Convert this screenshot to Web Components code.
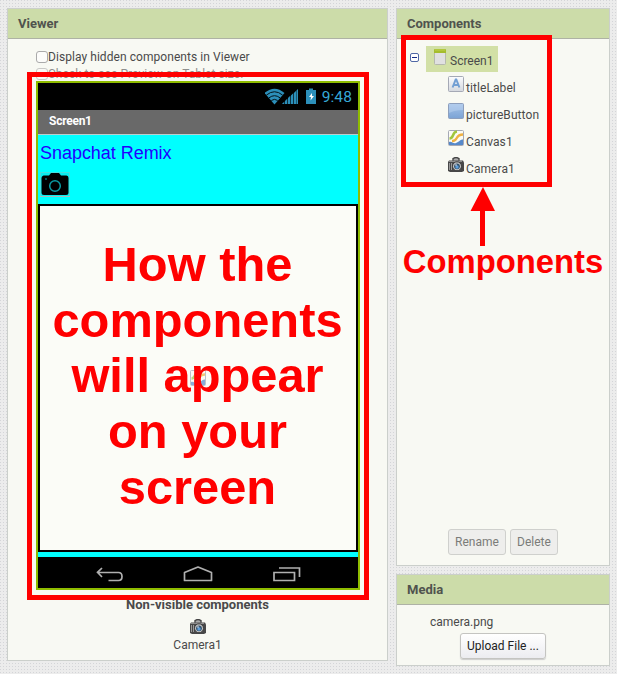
<!DOCTYPE html>
<html lang="en"><head><meta charset="utf-8"><title>Designer</title>
<style>
html,body{margin:0;height:674px;overflow:hidden}
body{font:12px/16px Roboto,sans-serif;color:#4a4a4a}
</style></head><body>
<designer-app></designer-app>
<script>
function define(name, html, setup){
  const t=document.createElement('template'); t.innerHTML=html;
  customElements.define(name, class extends HTMLElement{
    connectedCallback(){
      if(this.shadowRoot) return;
      this.attachShadow({mode:'open'}).append(t.content.cloneNode(true));
      if(setup) setup(this,this.shadowRoot);
    }
  });
}
const ICONS={
 label:`<defs><linearGradient id="g" x2="0" y2="1"><stop stop-color="#fbfcff"/><stop offset="1" stop-color="#d5d8de"/></linearGradient></defs><rect x=".5" y=".5" width="15" height="15" rx="1" fill="url(#g)" stroke="#a5a9b5"/><path d="M4.600 11.500 7.700 3.500h.6l3.100 8M5.800 9h4.400" fill="none" stroke="#739fd3" stroke-width="2"/>`,
 button:`<defs><linearGradient id="g" x2="0" y2="1"><stop stop-color="#a6c4e9"/><stop offset="1" stop-color="#7ba3d5"/></linearGradient></defs><rect x=".5" y=".5" width="15" height="15" rx="1" fill="url(#g)" stroke="#8d9fbd"/><path d="M1 1h14v6Q7 7 1 10z" fill="#c0d7f2" opacity=".45"/>`,
 canvas:`<rect x=".5" y=".5" width="15" height="15" rx="1" fill="#fbfbf5" stroke="#a5a9b5"/><path d="M1 12C4 11 5 14 8 13S12 9.500 15 9.500V15H1z" fill="#5689ca"/><path d="M1.500 8.500C6.500 8.500 3.500 2 9 1.500" fill="none" stroke="#a1c63d" stroke-width="2.500"/><path d="M4 11C10.500 11.500 6.500 4.500 15 4.500" fill="none" stroke="#efb142" stroke-width="2.300"/>`,
 camera:`<path d="M5 4V1.600Q8-.500 11 1.600V4" fill="#aaa" stroke="#444" stroke-width="1.400"/><path d="M1 3.500h14l1 2V14l-2 1H2l-2-1V5z" fill="#484848"/><path d="M1.500 6v7M3.500 6v7" stroke="#999"/><path d="M1 4.300h13" stroke="#a0a0a0"/><circle cx="9" cy="9.300" r="4.500" fill="#c5c5c5" stroke="#383838"/><circle cx="9" cy="9.300" r="2.900" fill="#33536c"/><circle cx="9" cy="10" r="1.700" fill="#5d9edc"/><circle cx="8" cy="8" r=".8" fill="#eef"/>`,
 screen:`<rect x="2.500" y=".5" width="11" height="15" rx="1" fill="#e0e0e0" stroke="#b5b8ae"/><path d="M2 4V1q0-1 1-1h10q1 0 1 1v3z" fill="#a5bd2d"/><path d="M3 1h10" stroke="#bfd24f"/>`
};
define('comp-icon',`<style>:host{display:block;width:16px;height:16px;flex:none}svg{display:block}</style><svg width="16" height="16" viewBox="0 0 16 16"></svg>`,
 (h,r)=>{r.querySelector('svg').innerHTML=ICONS[h.getAttribute('name')]});

define('ui-panel',`<style>
:host{display:flex;flex-direction:column;box-sizing:border-box;border:1px solid #cbcfcb;background:#f8f9f3}
header{box-sizing:border-box;height:30px;padding:0 10px;background:#ccdca9;border-bottom:1px solid #aeb2a5;font:bold 13px/29px Roboto,sans-serif;color:#50534e;flex:none}
main{flex:1;display:flex;flex-direction:column;min-height:0}
</style><header><slot name="title"></slot></header><main><slot></slot></main>`);

define('check-row',`<style>:host{display:flex;align-items:center;height:17px;white-space:nowrap;letter-spacing:.06px}
i{box-sizing:border-box;width:12px;height:12px;border:1px solid #aaa;border-radius:3px;background:#fcfcfa;flex:none}
:host([faded]){opacity:.6}</style><i></i><slot></slot>`);

define('tree-item',`<style>:host{display:flex;align-items:flex-start;height:27px;padding-left:51px}
span{line-height:16px;padding:4px 0 0 2px;letter-spacing:.08px}</style><comp-icon></comp-icon><span><slot></slot></span>`,
 (h,r)=>{const old=r.querySelector('comp-icon');const n=document.createElement('comp-icon');n.setAttribute('name',h.getAttribute('icon'));old.replaceWith(n)});

define('tree-root',`<style>:host{display:flex;height:26px;padding-left:13px;margin-bottom:4px}
svg{margin:7px 7px 0 0}
div{display:flex;box-sizing:border-box;width:72px;background:#d2e0a6;padding:3px 0 0 6px}
span{padding:4px 0 0 2px}</style>
<svg width="9" height="9"><rect x=".5" y=".5" width="8" height="8" rx="1.5" fill="#fff" stroke="#5068a5"/><path d="M2 4.500h5" stroke="#152c86"/></svg>
<div><comp-icon name="screen"></comp-icon><span><slot></slot></span></div>`);

define('ui-button',`<style>:host{display:block;box-sizing:border-box;height:26px;line-height:24px;text-align:center;border:1px solid #c4c4c1;border-radius:3px;background:linear-gradient(#fff,#ececf0);color:#222;box-shadow:0 1px 1px #ccc}
:host([disabled]){background:#eeeeec;border-color:#cfd0cd;color:#7b7c79;box-shadow:none}</style><slot></slot>`);

define('status-bar',`<style>:host{display:flex;align-items:center;justify-content:flex-end;box-sizing:border-box;height:27px;padding-right:6px;background:#000;color:#36a9d6}
svg{margin-right:6px}span{font:15.5px/26px Roboto,sans-serif;letter-spacing:.1px}</style>
<svg width="51" height="17" viewBox="0 0 51 17"><g transform="translate(-1 0)"><path d="M0.500 5Q10.500-3.500 20.500 5L10.500 16.500z" fill="#2c8fba"/><path d="M2.500 7Q10.500.500 18.500 7M5 9.800Q10.500 5.600 16 9.800M7.300 12.500Q10.500 10.200 13.700 12.500" fill="none" stroke="#031218" stroke-width="1"/></g>
<path d="M17 16h2v-2zM20 16h2v-5l-2 2zM23 16h2V8l-2 2zM26 16h2V5.500l-2 2zM29 16h2V3l-2 2zM31.600 16H33V1l-1.400 1.500z" fill="#2c8fba"/><path d="M17 16 33 1v15z" fill="#2c8fba" opacity=".35"/><path d="M41 2h3V.500h4V2h3v14H41z" fill="#2c8fba"/><path d="M47 5l-3 4h2L45.500 12.500 49 8h-2z" fill="#fff"/></svg><span>9:48</span>`);

define('nav-bar',`<style>:host{display:block;height:31px;background:#000}svg{display:block}</style>
<svg width="320" height="31" fill="none" stroke="#b0b0b0" stroke-width="1.700"><path d="M64 11 59.500 15.300 64 20M60 15.500H80.500q3.500 0 3.500 4T80.500 23.500H70.500"/><path d="M146.500 23.500V15.500L160 10l13.500 5.500v8z" stroke-linejoin="round"/><path d="M236 15.500h20.500v8h-20.500zM241 11h20.500v9"/></svg>`);

define('phone-preview',`<style>
:host{display:flex;flex-direction:column;box-sizing:border-box;width:324px;height:509px;border:2px solid #8fbc00;background:#0ff;flex:none}
.title{box-sizing:border-box;height:25px;background:#696969;border-bottom:1px solid #bcc;color:#fff;font:bold 12px/22px Roboto,sans-serif;letter-spacing:-.25px;padding-left:11px}
.label{font:18px/20px "Liberation Sans",sans-serif;color:#20f;padding:8px 0 0 2px;height:27px;letter-spacing:-.04px}
.shot{display:block;margin:2px 0 0 2px;flex:none}
.canvas{box-sizing:border-box;height:348px;border:2px solid #000;background:#fbfcf7;display:flex;align-items:center;justify-content:center;margin:7px 0 5px;flex:none}
.canvas comp-icon{opacity:.7}
</style><status-bar></status-bar><div class="title">Screen1</div><div class="label">Snapchat Remix</div>
<svg class="shot" width="30" height="25"><rect x=".5" y=".5" width="29" height="24" fill="#08eef0" stroke="#4dd"/><path d="M0 24.500h30" stroke="#a9b9b9"/><path d="M1.500 6q0-2 2-2.500H9L11 1h8l2 2.500h5.500q2 0 2 2.500v14.500q0 2.500-2.500 2.500H4q-2.500 0-2.500-2.500z" fill="#000"/><circle cx="15" cy="14" r="5.300" fill="none" stroke="#0a9ba2" stroke-width="1.500"/><circle cx="6" cy="7" r=".9" fill="#087d84"/></svg>
<div class="canvas"><comp-icon name="canvas"></comp-icon></div><nav-bar></nav-bar>`);

define('red-note',`<style>:host{display:block;position:absolute;color:#f00;font:bold 49px/55.7px "Liberation Sans",sans-serif;text-align:center;white-space:nowrap}</style><slot></slot>`);
define('red-frame',`<style>:host{display:block;position:absolute;box-sizing:border-box;border:5px solid #f00}</style>`);

define('designer-app',`<style>
:host{display:flex;gap:8px;position:relative;box-sizing:border-box;width:617px;height:674px;padding:8px 7px;
background:#ececec;background-image:radial-gradient(circle at .5px .5px,#d4d5d8 .7px,transparent .8px);background-size:3px 3px}
.viewer{width:381px;height:653px}
.side{display:flex;flex-direction:column;gap:8px;width:214px}
.comps{height:558px}.media{height:92px}
.checks{padding:9px 0 0 28px;height:33px}
phone-preview{margin-left:28px}
.hidden{display:flex;flex-direction:column;align-items:center;padding-top:7px;font-size:12px}
.hidden b{font-size:13px;line-height:16px}
.hidden comp-icon{margin:6px 0 2px}
.tree{padding-top:7px;flex:1}
.buttons{display:flex;gap:4px;justify-content:center;padding:0 0 10px}
.file{padding:9px 0 3px 33px}
.up{width:86px;margin:0 auto}
.f1{left:27px;top:72px;width:342px;height:528px}.f2{left:401px;top:35px;width:151px;height:152px}
.n1{left:39.500px;width:316px;top:237px;font-size:48.800px}.n2{left:401px;width:204px;top:243px;font-size:32.800px;line-height:38px}
.arrow{position:absolute;left:470px;top:187px}
</style>
<ui-panel class="viewer"><span slot="title">Viewer</span>
<div class="checks"><check-row>Display hidden components in Viewer</check-row><check-row faded>Check to see Preview on Tablet size.</check-row></div>
<phone-preview></phone-preview>
<div class="hidden"><b>Non-visible components</b><comp-icon name="camera"></comp-icon><span>Camera1</span></div></ui-panel>
<div class="side"><ui-panel class="comps"><span slot="title">Components</span>
<div class="tree"><tree-root>Screen1</tree-root><tree-item icon="label">titleLabel</tree-item><tree-item icon="button">pictureButton</tree-item><tree-item icon="canvas">Canvas1</tree-item><tree-item icon="camera">Camera1</tree-item></div>
<div class="buttons"><ui-button disabled style="width:58px">Rename</ui-button><ui-button disabled style="width:48px">Delete</ui-button></div></ui-panel>
<ui-panel class="media"><span slot="title">Media</span><div class="file">camera.png</div><ui-button class="up">Upload File ...</ui-button></ui-panel></div>
<red-frame class="f1"></red-frame><red-frame class="f2"></red-frame>
<red-note class="n1">How the<br>components<br>will appear<br>on your<br>screen</red-note>
<red-note class="n2">Components</red-note>
<svg class="arrow" width="26" height="60"><path d="M13 0 25 24H15V59h-5V24H.500z" fill="#f00"/></svg>`);
</script></body></html>
